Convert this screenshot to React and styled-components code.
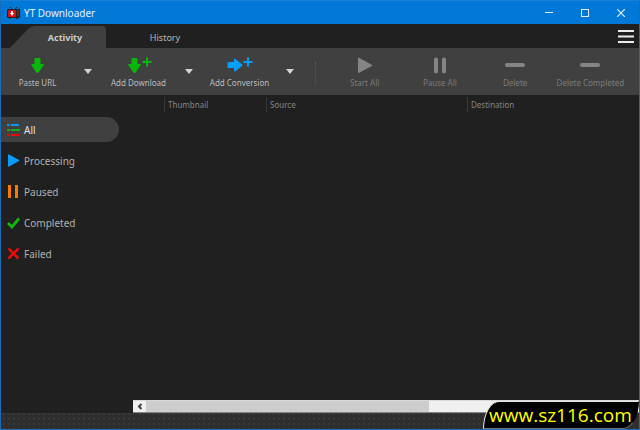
import React from "react";
import styled, { createGlobalStyle, css } from "styled-components";

const Global = createGlobalStyle`
  *, *::before, *::after { box-sizing: border-box; }
  html, body { margin: 0; padding: 0; background: #202020; }
  body { font-family: "Noto Sans", "Open Sans", sans-serif; font-size: 9px; color: #b4b4b4; }
  button { font: inherit; color: inherit; background: none; border: 0; padding: 0; margin: 0; }
  svg { display: block; flex: none; }
`;

const Window = styled.div`
  position: relative;
  display: flex;
  flex-direction: column;
  min-height: 100vh;
  background: #202020;
  border: 1px solid #1a6cb4;
  border-top: 0;
`;

const TitleBar = styled.header`
  display: flex;
  align-items: center;
  height: 24px;
  padding-left: 6px;
  background: #0078d7;
  border-top: 1px solid #1a7fd4;
  color: #e4f1fc;
`;

const Title = styled.h1`
  flex: 1;
  margin: 0 0 0 4px;
  font-size: 10px;
  font-weight: 400;
`;

const WindowButton = styled.button`
  display: grid;
  place-items: center;
  width: 36px;
  height: 23px;
`;

const TabBar = styled.nav`
  display: flex;
  align-items: flex-end;
  height: 24px;
`;

const Tab = styled.button`
  height: 22px;
  width: ${(p) => (p.$active ? 96 : 118)}px;
  margin-left: ${(p) => (p.$active ? 9 : 0)}px;
  padding-left: ${(p) => (p.$active ? 14 : 0)}px;
  font-size: 9px;
  font-weight: ${(p) => (p.$active ? 700 : 400)};
  color: ${(p) => (p.$active ? "#cccccc" : "#b8b8b8")};
  ${(p) =>
    p.$active &&
    css`
      background: #404040;
      clip-path: path("M0 22 L18 3 Q21 0 25 0 H92 Q96 0 96 4 V22 Z");
    `}
`;

const MenuButton = styled.button`
  display: grid;
  place-items: center;
  margin-left: auto;
  width: 26px;
  height: 24px;
`;

const Toolbar = styled.div`
  display: flex;
  height: 47px;
  padding-right: 11px;
  background: #404040;
`;

const ToolButton = styled.button`
  display: flex;
  flex-direction: column;
  align-items: center;
  gap: 3px;
  width: 73px;
  padding-top: 9px;
  white-space: nowrap;
  line-height: 12px;
  font-size: 8px;
  color: #bcbcbc;
  &:disabled {
    flex: 1 1 0;
    color: #7c7c7c;
  }
`;

const DropButton = styled.button`
  display: grid;
  place-items: center;
  width: 28px;
  height: 46px;
`;

const ToolDivider = styled.div`
  width: 1px;
  height: 22px;
  margin: 14px 11px 0;
  border-left: 1px dotted #5c5c5c;
`;

const Content = styled.div`
  flex: 1;
  display: flex;
`;

const Sidebar = styled.ul`
  list-style: none;
  width: 132px;
  margin: 0;
  padding: 22px 14px 0 0;
  display: flex;
  flex-direction: column;
  gap: 6px;
`;

const Filter = styled.button`
  display: flex;
  align-items: center;
  gap: 4px;
  width: 100%;
  height: 25px;
  padding-left: 6px;
  border-radius: 0 13px 13px 0;
  font-size: 10px;
  background: ${(p) => (p.$active ? "#404040" : "transparent")};
  color: ${(p) => (p.$active ? "#e0e0e0" : "#b0b0b0")};
`;

const Listing = styled.main`
  flex: 1;
  min-width: 0;
  display: flex;
  flex-direction: column;
`;

const Table = styled.table`
  width: 100%;
  table-layout: fixed;
  border-collapse: collapse;
`;

const HeadCell = styled.th`
  width: ${(p) => p.$width};
  height: 19px;
  padding: 0 0 0 4px;
  text-align: left;
  font-weight: 400;
  font-size: 8px;
  color: #848484;
  background: ${(p) =>
    p.$first ? "none" : "linear-gradient(#383838, #383838) 0 50% / 1px 15px no-repeat"};
`;

const ScrollBar = styled.div`
  display: flex;
  height: 13px;
  margin-top: auto;
  background: #f0f0f0;
  border-top: 1px solid #d8d8d8;
  border-bottom: 1px solid #858585;
`;

const ScrollArrow = styled.button`
  display: grid;
  place-items: center;
  width: 13px;
`;

const ScrollThumb = styled.div`
  width: 56%;
  background: #cdcdcd;
`;

const StatusBar = styled.footer`
  height: 16px;
  border-top: 1px dotted #3a3a3a;
  background: radial-gradient(circle at 2px 2px, #383838 0, #383838 1px, transparent 1px) 1px 3px / 5px 5px, #2e2e2e;
`;

const Watermark = styled.div`
  position: absolute;
  right: 0;
  bottom: 0;
  width: 156px;
  height: 28px;
  padding-left: 5px;
  background: #000;
  border: 1px solid #e8e8e8;
  border-right-color: #000;
  border-bottom-color: #777;
  border-radius: 16px 0 16px 0 / 28px 0 28px 0;
  color: #ffff00;
  font: 500 19px/26px "Open Sans", "Noto Sans", sans-serif;
  white-space: nowrap;
`;

const AppIcon = () => (
  <svg width="13" height="12" viewBox="0 0 13 12">
    <path d="M3 0l3 3M10 0L7 3" stroke="#262b34" strokeWidth="1" />
    <rect x="0" y="2" width="13" height="9" rx="1" fill="#2b2022" />
    <rect x="1" y="3" width="8" height="7" rx="1" fill="#e01010" />
    <path d="M4 4h2v2h1L5 9 3 6h1z" fill="#fff" />
    <path d="M10 4h2M10 6h2M10 8h2" stroke="#9a2730" />
    <path d="M2 11h2v1H2zM9 11h2v1H9z" fill="#262b34" />
  </svg>
);

const DownArrow = ({ plus }) => (
  <svg width={plus ? 26 : 13} height="17" viewBox={`0 0 ${plus ? 26 : 13} 17`}>
    <g transform={plus ? "translate(2 0)" : undefined}>
      <path
        d="M3.500 2Q3.500 1 4.500 1h4q1 0 1 1v5h2.500q1.500 0 .7 1L8 15Q6.500 17 5 15L.3 8Q-.5 7 1 7h2.500z"
        fill="#08b808"
      />
      {plus && <path d="M19 .5v9M14.500 5h9" stroke="#08b808" strokeWidth="2" />}
    </g>
  </svg>
);

const ConvertArrow = () => (
  <svg width="26" height="17" viewBox="0 0 26 17">
    <path d="M1.500 5H7V2.500Q7 1 8.400 2L15 7.300q1 .8 0 1.600L8.400 14.200Q7 15.200 7 13.800V11H1.500q-1 0-1-1V6q0-1 1-1z" fill="#089cfc" />
    <path d="M21 .5v9M16.500 5h9" stroke="#089cfc" strokeWidth="2" />
  </svg>
);

const Caret = () => (
  <svg width="8" height="5" viewBox="0 0 8 5">
    <path d="M0 0h8L4 5z" fill="#d4d4d4" />
  </svg>
);

const StartIcon = () => (
  <svg width="16" height="17" viewBox="0 0 16 17">
    <path d="M1 1.500q0-1.500 1.300-.6l12.500 6.800q1 .6 0 1.300L2.300 15.800Q1 16.500 1 15z" fill="#858585" />
  </svg>
);

const PauseIcon = () => (
  <svg width="14" height="17" viewBox="0 0 14 17">
    <path d="M3 2.500v12M11 2.500v12" stroke="#858585" strokeWidth="4" strokeLinecap="round" />
  </svg>
);

const MinusIcon = () => (
  <svg width="20" height="17" viewBox="0 0 20 17">
    <rect x="0" y="6" width="20" height="4" rx="2" fill="#858585" />
  </svg>
);

const AllIcon = () => (
  <svg width="13" height="13" viewBox="0 0 13 13" strokeWidth="2">
    <path d="M0 2h2.500M4 2h8" stroke="#0898f0" />
    <path d="M0 7h3M4 7h9" stroke="#10b010" />
    <path d="M0 12h2.500M4 12h8" stroke="#f00808" />
  </svg>
);

const PlayIcon = () => (
  <svg width="13" height="13" viewBox="0 0 13 13">
    <path d="M1 1q0-1 1-.5L12 6q.8.500 0 1L2 12.500q-1 .5-1-.5z" fill="#089cfc" />
  </svg>
);

const PausedIcon = () => (
  <svg width="13" height="13" viewBox="0 0 13 13">
    <path d="M2.500 0v13M9.500 0v13" stroke="#f47a0c" strokeWidth="3" />
  </svg>
);

const CheckIcon = () => (
  <svg width="13" height="13" viewBox="0 0 13 13">
    <path d="M1 7l4 4L12 2.500" fill="none" stroke="#10b810" strokeWidth="2.800" />
  </svg>
);

const CrossIcon = () => (
  <svg width="13" height="13" viewBox="0 0 13 13">
    <path d="M1.500 1.500l10 10M11.500 1.500l-10 10" stroke="#e80c0c" strokeWidth="2.600" />
  </svg>
);

const creators = [
  { label: "Paste URL", icon: <DownArrow /> },
  { label: "Add Download", icon: <DownArrow plus /> },
  { label: "Add Conversion", icon: <ConvertArrow /> },
];

const actions = [
  { label: "Start All", icon: <StartIcon /> },
  { label: "Pause All", icon: <PauseIcon /> },
  { label: "Delete", icon: <MinusIcon /> },
  { label: "Delete Completed", icon: <MinusIcon /> },
];

const filters = [
  { label: "All", icon: <AllIcon />, active: true },
  { label: "Processing", icon: <PlayIcon /> },
  { label: "Paused", icon: <PausedIcon /> },
  { label: "Completed", icon: <CheckIcon /> },
  { label: "Failed", icon: <CrossIcon /> },
];

export default function App() {
  return (
    <>
      <Global />
      <Window>
        <TitleBar>
          <AppIcon />
          <Title>YT Downloader</Title>
          <WindowButton aria-label="Minimize">
            <svg width="9" height="9" viewBox="0 0 9 9"><path d="M0 4.500h8" stroke="#e4f1fc" /></svg>
          </WindowButton>
          <WindowButton aria-label="Maximize">
            <svg width="8" height="8" viewBox="0 0 8 8"><rect x=".5" y=".5" width="7" height="7" fill="none" stroke="#e4f1fc" /></svg>
          </WindowButton>
          <WindowButton aria-label="Close">
            <svg width="8" height="8" viewBox="0 0 8 8"><path d="M0 0l8 8M8 0L0 8" stroke="#e4f1fc" strokeWidth="1.200" /></svg>
          </WindowButton>
        </TitleBar>
        <TabBar>
          <Tab $active>Activity</Tab>
          <Tab>History</Tab>
          <MenuButton aria-label="Menu">
            <svg width="16" height="14" viewBox="0 0 16 14">
              <path d="M0 2h16M0 7.500h16M0 13h16" stroke="#ececec" strokeWidth="2" />
            </svg>
          </MenuButton>
        </TabBar>
        <Toolbar>
          {creators.map((c) => (
            <React.Fragment key={c.label}>
              <ToolButton>{c.icon}{c.label}</ToolButton>
              <DropButton aria-label={`${c.label} options`}><Caret /></DropButton>
            </React.Fragment>
          ))}
          <ToolDivider />
          {actions.map((a) => (
            <ToolButton key={a.label} disabled>{a.icon}{a.label}</ToolButton>
          ))}
        </Toolbar>
        <Content>
          <Sidebar>
            {filters.map((f) => (
              <li key={f.label}>
                <Filter $active={f.active}>{f.icon}{f.label}</Filter>
              </li>
            ))}
          </Sidebar>
          <Listing>
            <Table>
              <thead>
                <tr>
                  <HeadCell $first $width="31px" />
                  <HeadCell $width="102px">Thumbnail</HeadCell>
                  <HeadCell $width="201px">Source</HeadCell>
                  <HeadCell $width="auto">Destination</HeadCell>
                </tr>
              </thead>
            </Table>
            <ScrollBar>
              <ScrollArrow aria-label="Scroll left">
                <svg width="6" height="7" viewBox="0 0 6 7"><path d="M4.500 1L2 3.500 4.500 6" fill="none" stroke="#404040" strokeWidth="2" /></svg>
              </ScrollArrow>
              <ScrollThumb />
            </ScrollBar>
          </Listing>
        </Content>
        <StatusBar />
        <Watermark>www.sz116.com</Watermark>
      </Window>
    </>
  );
}
